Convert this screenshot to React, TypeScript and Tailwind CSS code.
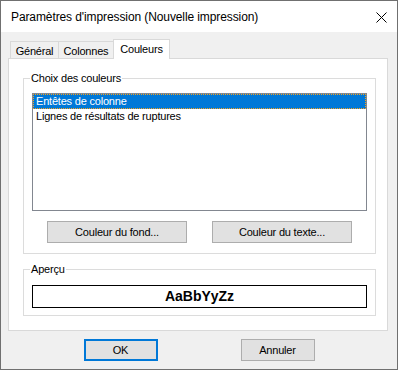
import React from "react";

const tabs = [
  { label: "Général", w: "w-[49px]", active: false },
  { label: "Colonnes", w: "w-[56px]", active: false },
  { label: "Couleurs", w: "w-[57px]", active: true },
];

const rows = ["Entêtes de colonne", "Lignes de résultats de ruptures"];

const App = () => {
  return (
    <div className="w-[398px] h-[370px] border border-[#707070] bg-[#f0f0f0] flex flex-col font-['Liberation_Sans',Arial,sans-serif] text-[11px] tracking-[-0.2px] text-black">
      {/* Title bar */}
      <div className="h-[31px] bg-white flex items-center justify-between pl-[10px] pr-[10px] shrink-0">
        <span className="text-[12px] tracking-[-0.1px]">
          Paramètres d'impression (Nouvelle impression)
        </span>
        <svg width="11" height="11" viewBox="0 0 11 11" className="mt-[1px]">
          <path d="M0.5 0.5 L10.5 10.5 M10.5 0.5 L0.5 10.5" stroke="#000" strokeWidth="1" />
        </svg>
      </div>

      {/* Body */}
      <div className="flex-1 flex flex-col pt-[7px] pl-[7px] pr-[9px]">
        {/* Tabs */}
        <div className="flex items-end h-[19px] pl-[2px] relative z-10">
          {tabs.map((t, i) =>
            t.active ? (
              <div
                key={t.label}
                className={`${t.w} h-[20px] -mb-[1px] -ml-px bg-white border border-b-0 border-[#d9d9d9] flex justify-center pt-[2px] leading-[14px]`}
              >
                {t.label}
              </div>
            ) : (
              <div
                key={t.label}
                className={`${t.w} h-[17px] ${i > 0 ? "-ml-px" : ""} bg-[#f0f0f0] border border-b-0 border-[#d9d9d9] flex justify-center pt-[2px] leading-[14px]`}
              >
                {t.label}
              </div>
            )
          )}
        </div>

        {/* Tab panel */}
        <div className="h-[273px] bg-white border border-[#d9d9d9] flex flex-col pl-[14px] pr-[11px] pt-[12px]">
          <fieldset className="border border-[#dcdcdc] p-0 m-0">
            <legend className="ml-[6px] px-[1px] leading-[14px]">Choix des couleurs</legend>
            <div className="px-[8px] pt-[8px] pb-[10px] flex flex-col">
              <div className="h-[118px] border border-[#828790] bg-white flex flex-col">
                {rows.map((r, i) => (
                  <div
                    key={r}
                    className={`h-[15px] leading-[13px] pl-[2px] border border-dotted ${
                      i === 0
                        ? "bg-[#0078d7] text-white border-[#f7a21b]"
                        : "border-transparent"
                    }`}
                  >
                    {r}
                  </div>
                ))}
              </div>
              <div className="flex justify-center gap-[25px] mt-[10px]">
                <button className="w-[140px] h-[22px] bg-[#e1e1e1] border border-[#adadad] leading-[14px]">
                  Couleur du fond...
                </button>
                <button className="w-[140px] h-[22px] bg-[#e1e1e1] border border-[#adadad] leading-[14px]">
                  Couleur du texte...
                </button>
              </div>
            </div>
          </fieldset>

          <fieldset className="border border-[#dcdcdc] p-0 m-0 mt-[8px]">
            <legend className="ml-[6px] px-[1px] leading-[14px]">Aperçu</legend>
            <div className="px-[8px] pt-[9px] pb-[7px]">
              <div className="h-[23px] border border-black bg-white flex items-center justify-center font-bold text-[14px] tracking-normal">
                AaBbYyZz
              </div>
            </div>
          </fieldset>
        </div>

        {/* Dialog buttons */}
        <div className="flex justify-center gap-[83px] pt-[8px] -ml-[7px] -mr-[9px]">
          <button className="w-[74px] h-[22px] bg-[#e1e1e1] border-2 border-[#0078d7] leading-[14px]">
            OK
          </button>
          <button className="w-[74px] h-[22px] bg-[#e1e1e1] border border-[#adadad] leading-[14px]">
            Annuler
          </button>
        </div>
      </div>
    </div>
  );
};

export default App;
